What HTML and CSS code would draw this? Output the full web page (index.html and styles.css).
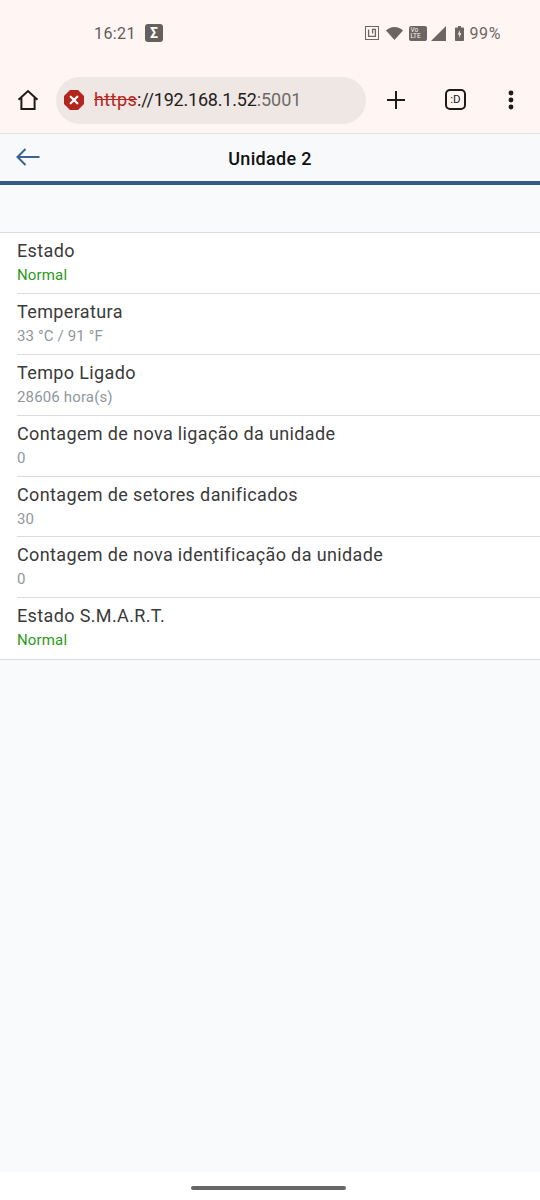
FILE: index.html
```html
<!DOCTYPE html>
<html lang="pt">
    <head>
        <meta charset="utf-8">
        <title>Unidade 2</title>
        <link rel="stylesheet" href="styles.css">
    </head>
    <body>
        <div class="chrome">
            <div class="statusbar">
                <div class="status-left">
                    <span class="clock">16:21</span>
                    <span class="sigma">Σ</span>
                </div>
                <div class="status-right">
                    <svg class="icon-nfc" width="14" height="14" viewBox="0 0 14 14">
                        <rect x="0.5" y="0.5" width="13" height="13" fill="none" stroke="#6b6563" stroke-width="1"/>
                        <path d="M3.6 3.4V10.4H10.4V3.4H7.6V7.4" fill="none" stroke="#6b6563" stroke-width="1.3"/>
                    </svg>
                    <svg class="icon-wifi" width="17" height="13" viewBox="0 0 17 13">
                        <path d="M0 3.6C2.2 1.3 5.2 0 8.5 0S14.8 1.3 17 3.6L8.5 13Z" fill="#6b6563"/>
                    </svg>
                    <span class="volte">Vo<br>LTE</span>
                    <svg class="icon-signal" width="15" height="15" viewBox="0 0 15 15">
                        <path d="M0 15L15 0V15Z" fill="#6b6563"/>
                    </svg>
                    <svg class="icon-battery" width="9" height="15" viewBox="0 0 9 15">
                        <path d="M3 0H6V1.4H8C8.6 1.4 9 1.8 9 2.4V14C9 14.6 8.6 15 8 15H1C0.4 15 0 14.6 0 14V2.4C0 1.8 0.4 1.4 1 1.4H3Z" fill="#6b6563"/>
                        <path d="M5 4L2.8 8.6H4.3L4 12L6.3 7.2H4.8Z" fill="#fff6f3"/>
                    </svg>
                    <span class="battery-text">99%</span>
                </div>
            </div>
            <div class="toolbar">
                <svg class="icon-home" width="22" height="22" viewBox="0 0 22 22">
                    <path d="M1.5 10.8L11 2L20.5 10.8M4.4 8.4V20H17.6V8.4" fill="none" stroke="#1d1b1a" stroke-width="2"/>
                </svg>
                <div class="omnibox">
                    <svg class="icon-error" width="20" height="20" viewBox="0 0 20 20">
                        <path d="M6 0H14L20 6V14L14 20H6L0 14V6Z" fill="#b3261e"/>
                        <path d="M6.7 6.7L13.3 13.3M13.3 6.7L6.7 13.3" stroke="#fff" stroke-width="2.2" stroke-linecap="round"/>
                    </svg>
                    <span class="url"><span class="url-scheme">https</span><span class="url-host">://192.168.1.52</span><span class="url-port">:5001</span></span>
                </div>
                <svg class="icon-plus" width="20" height="20" viewBox="0 0 20 20">
                    <path d="M10 1V19M1 10H19" stroke="#1d1b1a" stroke-width="2"/>
                </svg>
                <span class="tabs">:D</span>
                <svg class="icon-menu" width="6" height="20" viewBox="0 0 6 20">
                    <circle cx="3" cy="3" r="2.4" fill="#1d1b1a"/>
                    <circle cx="3" cy="10" r="2.4" fill="#1d1b1a"/>
                    <circle cx="3" cy="17" r="2.4" fill="#1d1b1a"/>
                </svg>
            </div>
        </div>

        <div class="page">
            <div class="header">
                <svg class="icon-back" width="24" height="18" viewBox="0 0 24 18">
                    <path d="M23.5 9H1.5M9.5 1L1.5 9L9.5 17" fill="none" stroke="#3a6491" stroke-width="2"/>
                </svg>
                <h1 class="header-title">Unidade 2</h1>
            </div>
            <div class="spacer"></div>
            <ul class="list">
                <li class="row">
                    <div class="row-title">Estado</div>
                    <div class="row-value good">Normal</div>
                </li>
                <li class="row">
                    <div class="row-title">Temperatura</div>
                    <div class="row-value">33 °C / 91 °F</div>
                </li>
                <li class="row">
                    <div class="row-title">Tempo Ligado</div>
                    <div class="row-value">28606 hora(s)</div>
                </li>
                <li class="row">
                    <div class="row-title">Contagem de nova ligação da unidade</div>
                    <div class="row-value">0</div>
                </li>
                <li class="row">
                    <div class="row-title">Contagem de setores danificados</div>
                    <div class="row-value">30</div>
                </li>
                <li class="row">
                    <div class="row-title">Contagem de nova identificação da unidade</div>
                    <div class="row-value">0</div>
                </li>
                <li class="row">
                    <div class="row-title">Estado S.M.A.R.T.</div>
                    <div class="row-value good">Normal</div>
                </li>
            </ul>
        </div>

        <div class="navbar">
            <div class="nav-handle"></div>
        </div>
    </body>
</html>
```

FILE: styles.css
```css
* {
    box-sizing: border-box;
}

html, body {
    height: 100%;
}

body {
    margin: 0;
    display: flex;
    flex-direction: column;
    height: 1200px;
    overflow: hidden;
    font-family: Roboto, "Liberation Sans", sans-serif;
    background-color: #ffffff;
}

.chrome {
    height: 134px;
    flex: none;
    background-color: #fff6f3;
    border-bottom: 1px solid #e3e1e0;
}

.statusbar {
    height: 66px;
    padding: 0 39px 0 94px;
    display: flex;
    align-items: center;
    justify-content: space-between;
}

.status-left {
    display: flex;
    align-items: center;
    gap: 9px;
}

.clock {
    font-size: 16px;
    letter-spacing: 0.4px;
    color: #5f5b59;
}

.sigma {
    width: 18px;
    height: 18px;
    border-radius: 3px;
    background-color: #655f5d;
    color: #fff;
    font-size: 14px;
    font-weight: 700;
    line-height: 18px;
    text-align: center;
}

.status-right {
    display: flex;
    align-items: center;
}

.icon-wifi {
    margin-left: 7px;
}

.volte {
    width: 18px;
    height: 15px;
    margin-left: 6px;
    padding: 1px 0 0 1px;
    border-radius: 2px;
    background-color: #6b6563;
    color: #fff6f3;
    font-size: 6.5px;
    line-height: 6.5px;
}

.icon-signal {
    margin-left: 4px;
}

.icon-battery {
    margin-left: 9px;
}

.battery-text {
    margin-left: 5px;
    font-size: 16px;
    letter-spacing: 0.6px;
    color: #6b6563;
}

.toolbar {
    height: 67px;
    padding: 0 0 0 17px;
    display: flex;
    align-items: center;
}

.icon-home {
    flex: none;
}

.omnibox {
    width: 310px;
    height: 47px;
    margin: 2px 0 0 17px;
    padding: 0 0 2px 8px;
    border-radius: 24px;
    background-color: #efe7e4;
    display: flex;
    align-items: center;
    flex: none;
}

.url {
    margin-left: 10px;
    font-size: 18px;
    color: #232120;
    white-space: nowrap;
}

.url-scheme {
    color: #b3261e;
    letter-spacing: 0.4px;
    text-decoration: line-through;
}

.url-host {
    letter-spacing: -0.2px;
}

.url-port {
    color: #6e6a68;
}

.icon-plus {
    margin-left: 20px;
    flex: none;
}

.tabs {
    width: 21px;
    height: 21px;
    margin-left: 39px;
    border: 2px solid #1d1b1a;
    border-radius: 5px;
    font-size: 11.5px;
    line-height: 17px;
    text-align: center;
    color: #1d1b1a;
    flex: none;
}

.icon-menu {
    margin-left: 42px;
    flex: none;
}

.page {
    flex: 1;
    background-color: #f9fafc;
}

.header {
    height: 51px;
    position: relative;
    display: flex;
    align-items: center;
    justify-content: center;
    padding-top: 2px;
    background-color: #f7f9fa;
    border-bottom: 4px solid #365a86;
}

.icon-back {
    position: absolute;
    left: 16px;
    top: 14px;
}

.header-title {
    margin: 0;
    font-size: 18px;
    font-weight: 500;
    letter-spacing: 0.3px;
    color: #111111;
}

.spacer {
    height: 47px;
}

.list {
    margin: 0;
    padding: 0 0 0 17px;
    list-style: none;
    background-color: #ffffff;
    border-top: 1px solid #d9dce0;
    border-bottom: 1px solid #d9dce0;
}

.row {
    height: 60.9px;
    padding-top: 7px;
    border-bottom: 1px solid #d9dce0;
}

.row:last-child {
    border-bottom: none;
}

.row-title {
    font-size: 18px;
    line-height: 22px;
    letter-spacing: 0.37px;
    color: #3a3a3a;
}

.row-value {
    margin-top: 3px;
    font-size: 15px;
    line-height: 20px;
    letter-spacing: 0.15px;
    color: #8f979e;
}

.row-value.good {
    color: #2a9a1c;
}

.navbar {
    height: 28px;
    flex: none;
    background-color: #ffffff;
    display: flex;
    justify-content: center;
    padding-top: 14px;
}

.nav-handle {
    width: 155px;
    height: 4px;
    margin-left: -4px;
    border-radius: 2px;
    background-color: #666666;
}
```
